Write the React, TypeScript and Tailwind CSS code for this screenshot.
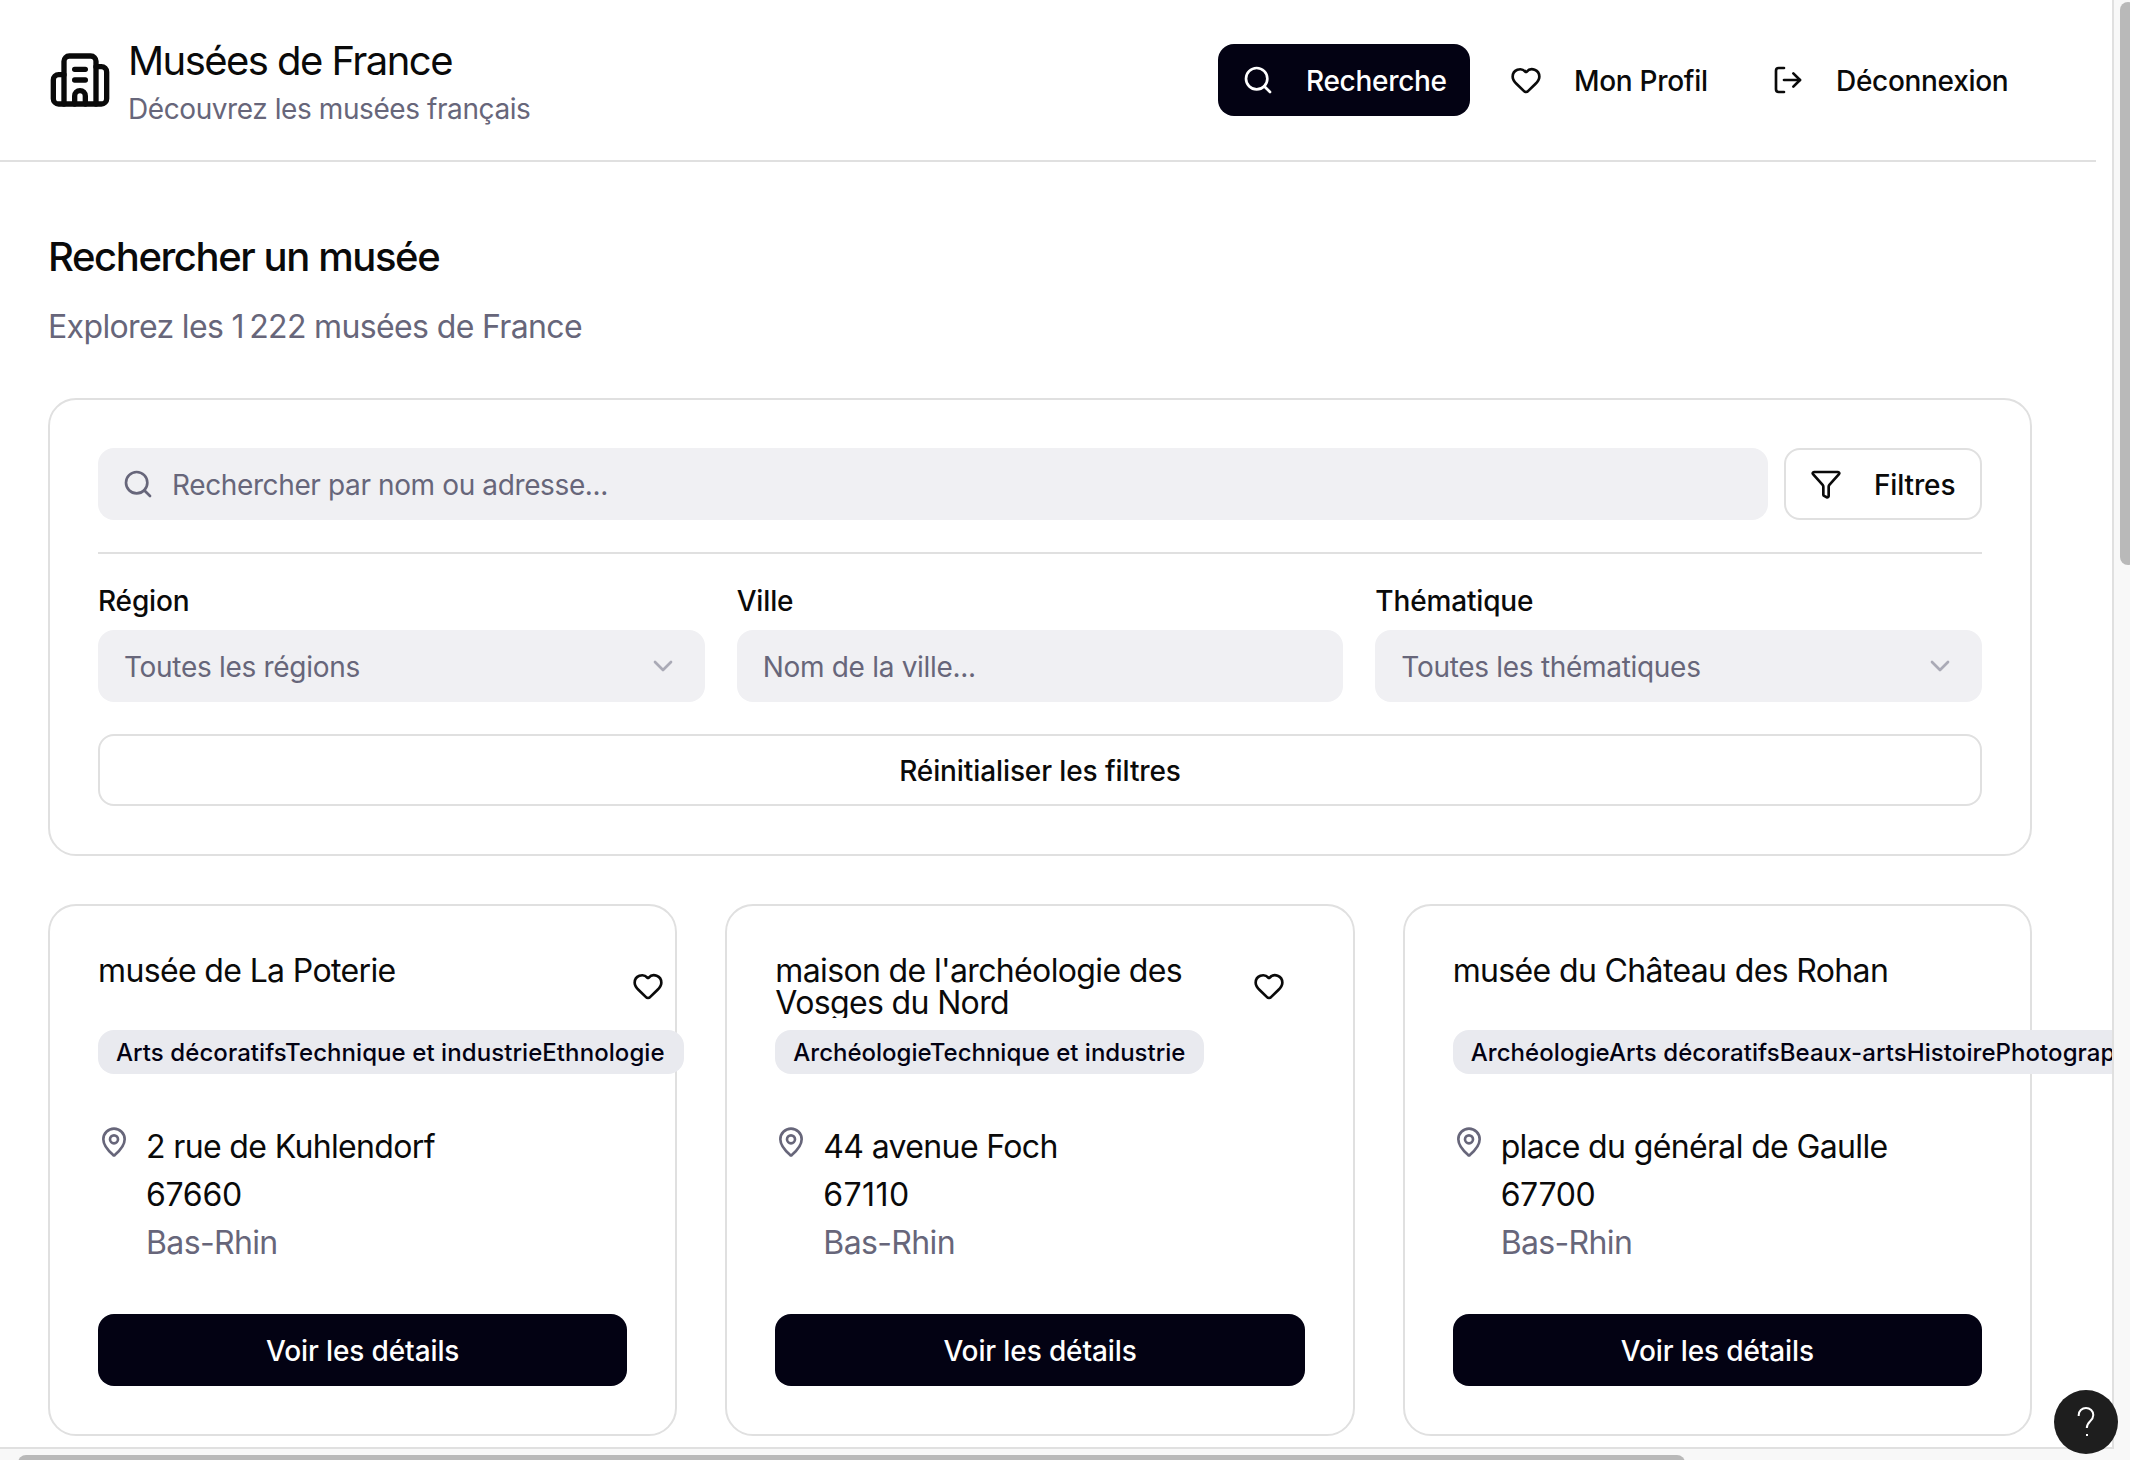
import React from "react";
import { Search, Heart, LogOut, Funnel, ChevronDown, MapPin, Building2 } from "lucide-react";

const museums = [
  {
    name: "musée de La Poterie",
    themes: "Arts décoratifsTechnique et industrieEthnologie",
    badge: "w-[586px] tracking-[0.07px]",
    street: "2 rue de Kuhlendorf",
    zip: "67660",
    zipTracking: "tracking-[-0.3px]",
    dept: "Bas-Rhin",
  },
  {
    name: "maison de l'archéologie des Vosges du Nord",
    themes: "ArchéologieTechnique et industrie",
    badge: "w-[429px]",
    street: "44 avenue Foch",
    zip: "67110",
    zipTracking: "tracking-[0.4px]",
    dept: "Bas-Rhin",
  },
  {
    name: "musée du Château des Rohan",
    themes: "ArchéologieArts décoratifsBeaux-artsHistoirePhotographie",
    badge: "w-[760px] tracking-[0.07px]",
    street: "place du général de Gaulle",
    zip: "67700",
    zipTracking: "tracking-[-0.4px]",
    dept: "Bas-Rhin",
  },
];

function NavButton({ icon, label, active, width }: { icon: React.ReactNode; label: string; active?: boolean; width: string }) {
  return (
    <button
      className={`flex h-[72px] items-center gap-8 rounded-2xl px-6 text-[28px] font-medium tracking-[-0.3px] whitespace-nowrap ${width} ${
        active ? "bg-[#030213] text-white" : "text-[#0a0a0a]"
      }`}
    >
      {icon}
      <span className="pt-0.5">{label}</span>
    </button>
  );
}

function Field({ label, placeholder, select }: { label: string; placeholder: string; select?: boolean }) {
  return (
    <div className="flex flex-col gap-[9px]">
      <label className="-mt-px h-10 text-[28px] leading-10 font-medium tracking-[-0.15px]">{label}</label>
      <div className="flex h-[72px] items-center justify-between rounded-2xl bg-[#f0f0f3] px-[26px] text-[28px] tracking-[-0.3px] text-[#67667a]">
        <span className="pt-0.5">{placeholder}</span>
        {select && <ChevronDown size={32} className="opacity-50" />}
      </div>
    </div>
  );
}

function MuseumCard({ m }: { m: (typeof museums)[number] }) {
  return (
    <article className="h-[532px] min-w-0 rounded-[28px] border-2 border-[#e0e0e0] bg-white p-12">
      <div className="grid">
        <div className="flex h-16 items-start justify-between">
          <h3 className="h-16 max-w-[450px] overflow-hidden pt-px text-[32px] leading-8 tracking-[-0.64px]">{m.name}</h3>
          <button className="flex h-16 w-[72px] shrink-0 items-center justify-center">
            <Heart size={32} />
          </button>
        </div>
        <span
          className={`mt-3 flex h-11 items-center rounded-2xl bg-[#e9eaef] pt-0.5 pl-[18px] text-2xl font-medium whitespace-nowrap text-[#030213] ${m.badge}`}
        >
          {m.themes}
        </span>
      </div>
      <div className="mt-12 flex h-36 items-start gap-4 text-[32px] leading-[48px] tracking-[-0.64px]">
        <MapPin size={32} className="mt-1 shrink-0 text-[#67667a]" />
        <div className="pt-px">
          <p>{m.street}</p>
          <p className={m.zipTracking}>{m.zip}</p>
          <p className="text-[#67667a]">{m.dept}</p>
        </div>
      </div>
      <button className="mt-12 flex h-[72px] w-full items-center justify-center rounded-2xl bg-[#030213] pt-0.5 text-[28px] font-medium tracking-[-0.12px] text-white">
        Voir les détails
      </button>
    </article>
  );
}

export default function App() {
  return (
    <div className="relative h-[1460px] w-[2130px] overflow-hidden bg-white font-['Inter',sans-serif] text-[#0a0a0a]">
      <div className="h-[1448px] w-[2112px] overflow-hidden">
        <header className="flex h-[162px] w-[2096px] items-center justify-between border-b-2 border-[#e0e0e0] pr-16 pl-12">
          <div className="flex items-center gap-4">
            <Building2 size={64} />
            <div className="pt-0.5">
              <h1 className="text-[40px] leading-[56px] tracking-[-1.55px]">Musées de France</h1>
              <p className="text-[28px] leading-10 tracking-[-0.42px] text-[#67667a]">Découvrez les musées français</p>
            </div>
          </div>
          <nav className="flex gap-4">
            <NavButton active icon={<Search size={32} className="shrink-0" />} label="Recherche" width="w-[252px]" />
            <NavButton icon={<Heart size={32} className="shrink-0" />} label="Mon Profil" width="w-[246px]" />
            <NavButton icon={<LogOut size={32} className="shrink-0" />} label="Déconnexion" width="w-[284px]" />
          </nav>
        </header>

        <main className="w-[2080px] px-12 pt-[65px]">
          <h2 className="text-[40px] leading-[60px] font-medium tracking-[-1.4px]">Rechercher un musée</h2>
          <p className="mt-4 text-[32px] leading-[48px] tracking-[-0.64px] text-[#67667a]">{"Explorez les 1\u202f222 musées de France"}</p>

          <section className="mt-[47px] h-[458px] rounded-[28px] border-2 border-[#e0e0e0] p-12">
            <div className="flex gap-4">
              <div className="flex h-[72px] flex-1 items-center gap-[18px] rounded-2xl bg-[#f0f0f3] px-6 text-[28px] tracking-[-0.38px] text-[#67667a]">
                <Search size={32} />
                <span className="pt-0.5">Rechercher par nom ou adresse...</span>
              </div>
              <button className="flex h-[72px] w-[198px] items-center gap-8 rounded-2xl border-2 border-[#e0e0e0] px-6 text-[28px] font-medium tracking-[-0.15px]">
                <Funnel size={32} className="shrink-0" />
                <span className="pt-0.5">Filtres</span>
              </button>
            </div>
            <div className="mt-8 grid grid-cols-3 gap-8 border-t-2 border-[#e0e0e0] pt-7">
              <Field label="Région" placeholder="Toutes les régions" select />
              <Field label="Ville" placeholder="Nom de la ville..." />
              <Field label="Thématique" placeholder="Toutes les thématiques" select />
            </div>
            <button className="mt-8 flex h-[72px] w-full items-center justify-center rounded-2xl border-2 border-[#e0e0e0] pt-0.5 text-[28px] font-medium tracking-[-0.1px]">
              Réinitialiser les filtres
            </button>
          </section>

          <section className="mt-12 grid grid-cols-3 gap-12">
            {museums.map((m) => (
              <MuseumCard key={m.name} m={m} />
            ))}
          </section>
        </main>
      </div>

      <div className="absolute top-0 right-0 h-[1449px] w-[18px] overflow-hidden border-l-2 border-[#e0e0e0] bg-[#f8f8f8]">
        <div className="mt-0.5 ml-1.5 h-[563px] w-4 rounded-full bg-[#b9b9b9]" />
      </div>
      <div className="absolute bottom-0 left-0 flex h-[13px] w-full overflow-hidden">
        <div className="h-full w-[2114px] border-t-2 border-[#e0e0e0] bg-[#f8f8f8]">
          <div className="mt-1.5 ml-[18px] h-4 w-[1667px] rounded-full bg-[#b9b9b9]" />
        </div>
        <div className="h-full flex-1 bg-[#f8f8f8]" />
      </div>

      <button className="absolute top-[1390px] left-[2054px] flex size-16 items-center justify-center rounded-full bg-[#1e1e1e]">
        <svg width="64" height="64" viewBox="0 0 64 64" fill="none" stroke="#fff" strokeWidth="2">
          <path d="M24.7 26v-1a7.3 7 0 0 1 14.6 0c0 6.500-6.500 6-6.500 13" />
          <path d="M32 45h2" />
        </svg>
      </button>
    </div>
  );
}
